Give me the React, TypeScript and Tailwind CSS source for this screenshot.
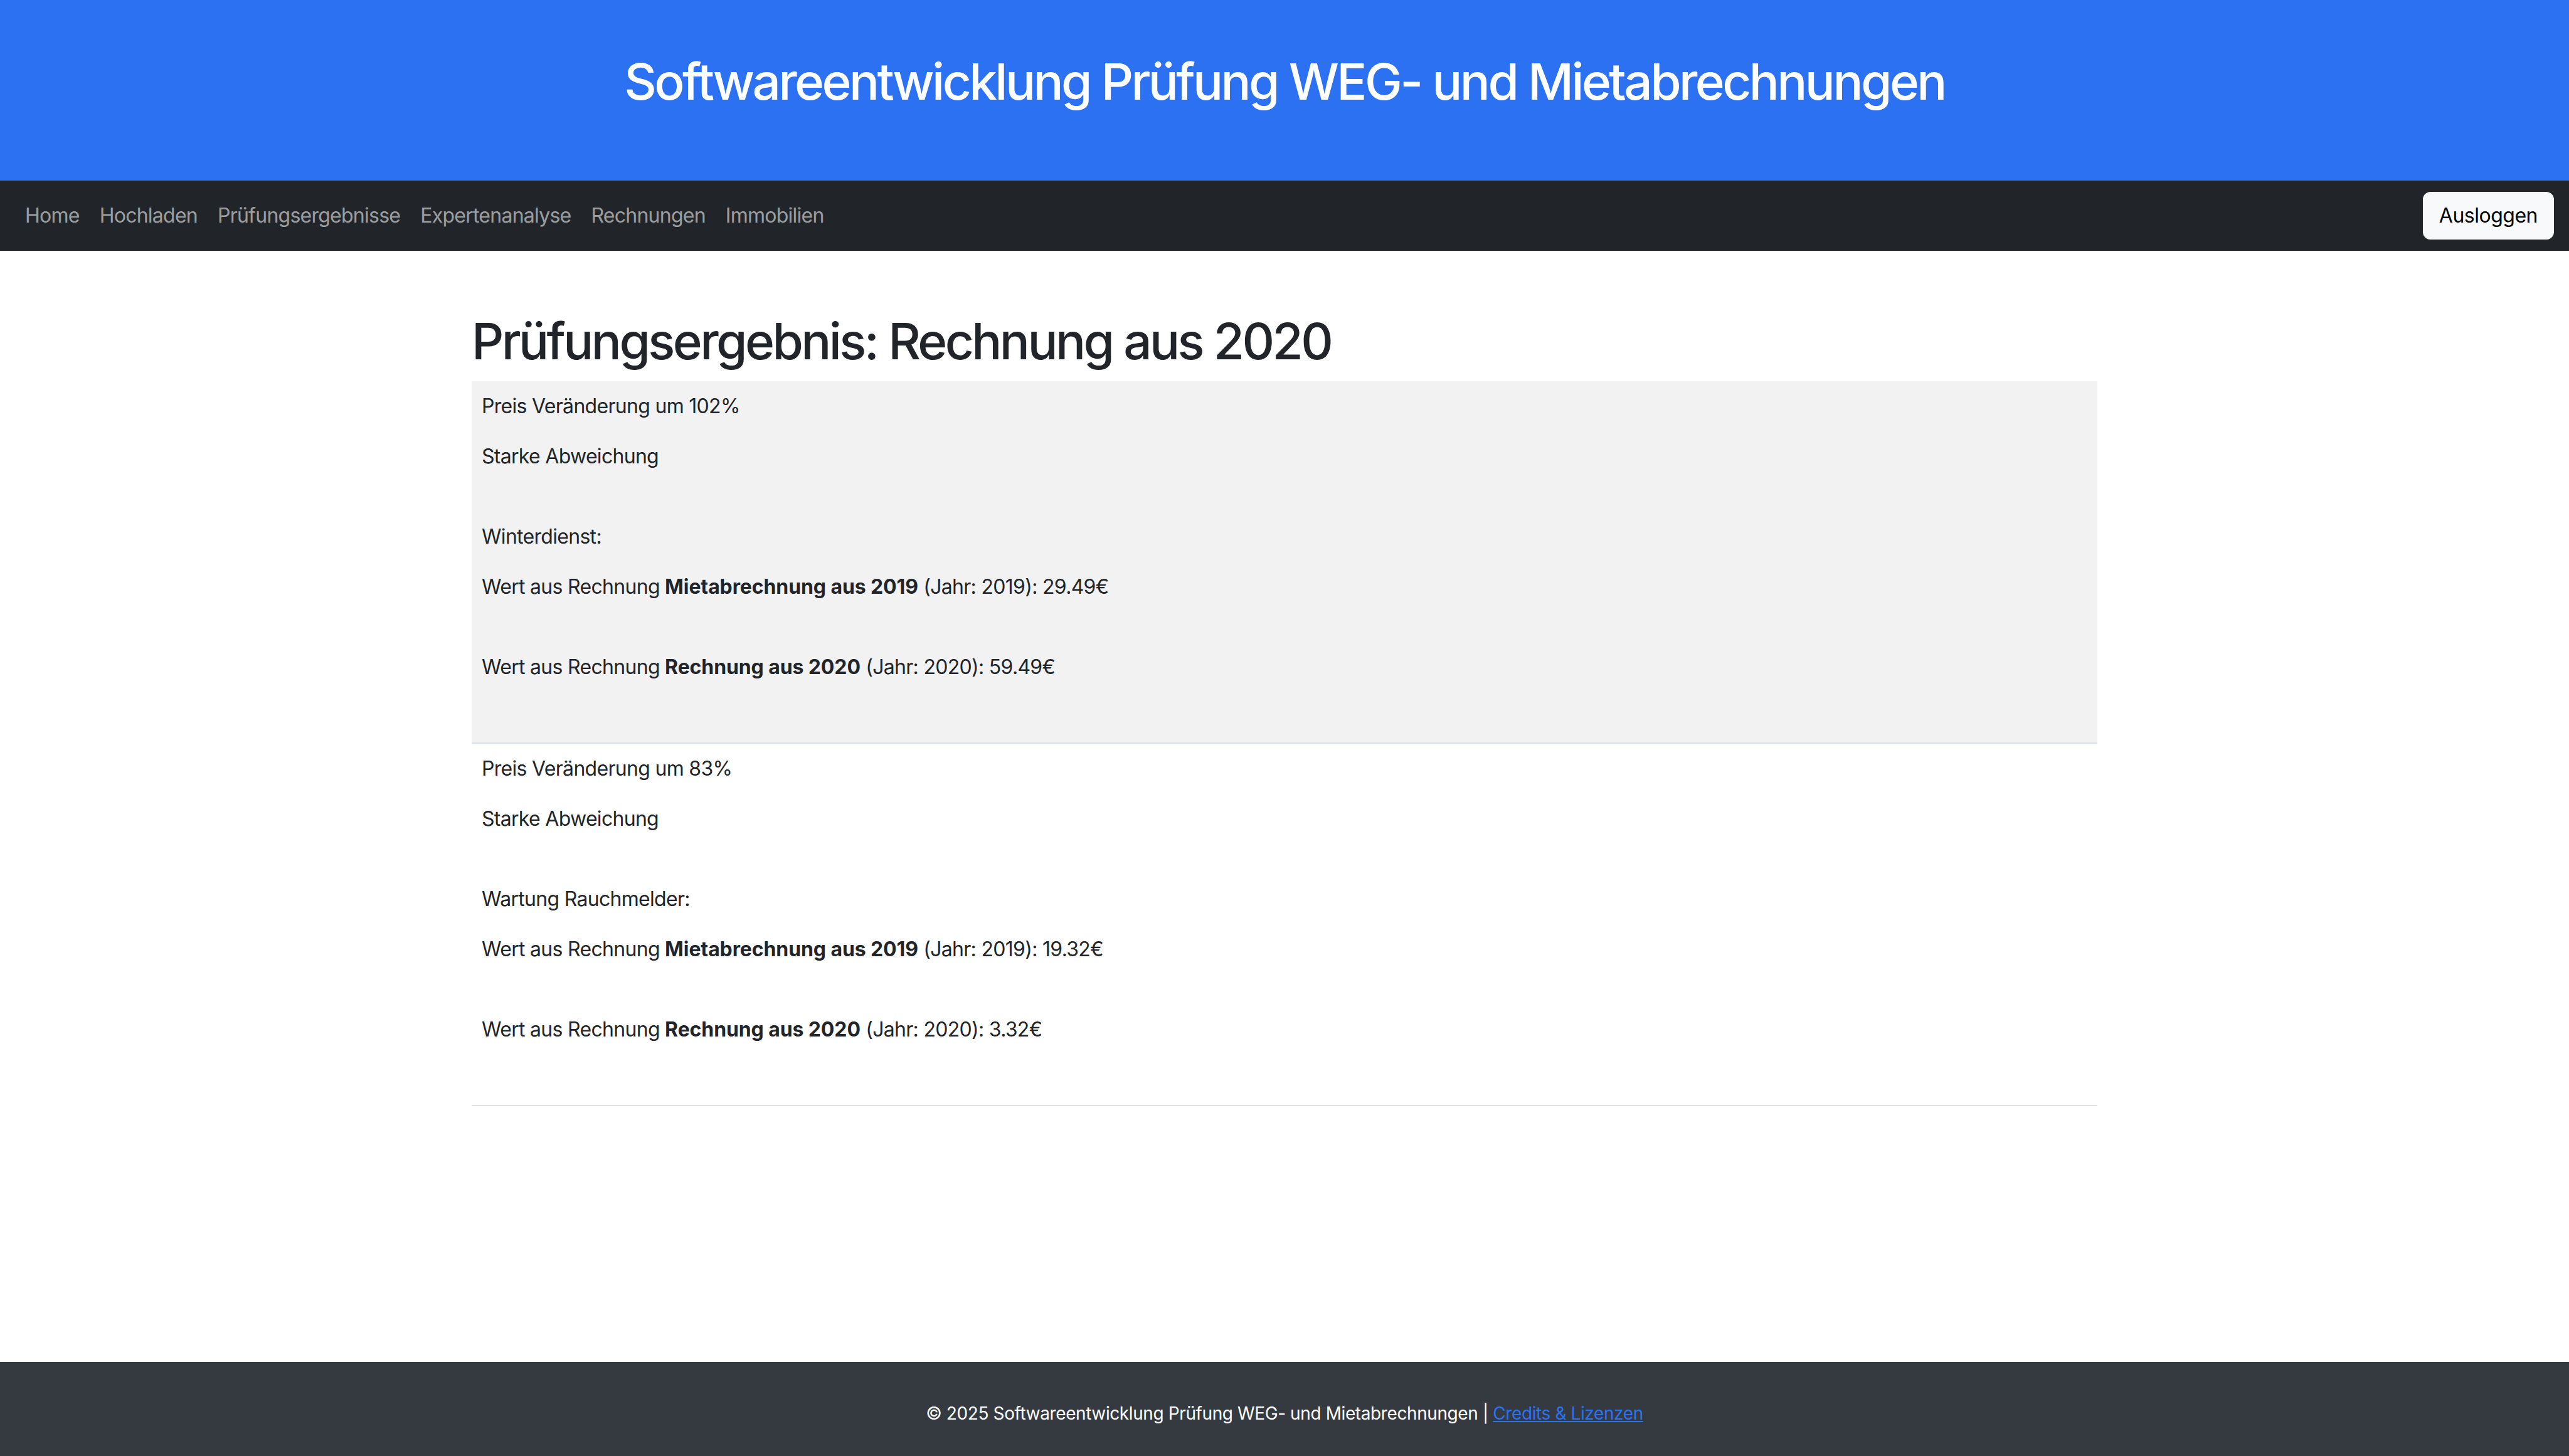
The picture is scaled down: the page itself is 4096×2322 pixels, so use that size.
import React from 'react';

const navItems = ['Home', 'Hochladen', 'Prüfungsergebnisse', 'Expertenanalyse', 'Rechnungen', 'Immobilien'];

interface Finding {
  change: number;
  label: string;
  oldValue: string;
  newValue: string;
}

const findings: Finding[] = [
  { change: 102, label: 'Winterdienst', oldValue: '29.49', newValue: '59.49' },
  { change: 83, label: 'Wartung Rauchmelder', oldValue: '19.32', newValue: '3.32' },
];

const Gap = () => <div className="h-[48px]" />;

const App: React.FC = () => {
  return (
    <div className="min-h-screen flex flex-col bg-white text-[#212529] font-['Inter','Noto_Sans',sans-serif]">
      {/* Header */}
      <header className="h-[288px] bg-[#2d71f3] pt-[82px] text-center">
        <h1 className="text-[80px] leading-[96px] font-medium text-white tracking-[-3.6px]">
          Softwareentwicklung Prüfung WEG- und Mietabrechnungen
        </h1>
      </header>

      {/* Navbar */}
      <nav className="h-[112px] bg-[#212529] flex items-center justify-between px-[24px]">
        <div className="flex items-center">
          {navItems.map((item) => (
            <a key={item} href="#" className="px-[16px] text-[32px] leading-[48px] text-white/55 tracking-[-0.75px]">
              {item}
            </a>
          ))}
        </div>
        <button className="bg-[#f8f9fa] border-2 border-[#f8f9fa] rounded-[12px] px-[24px] py-[12px] text-[32px] leading-[48px] text-black tracking-[-0.5px]">
          Ausloggen
        </button>
      </nav>

      {/* Main Content */}
      <main className="flex-1 w-[2640px] mx-auto px-[24px] mt-[96px]">
        <h1 className="text-[80px] leading-[96px] font-medium mb-[16px] tracking-[-3.6px]">
          Prüfungsergebnis: Rechnung aus 2020
        </h1>
        <div className="w-full">
          {findings.map((f, i) => (
            <div
              key={f.label}
              className={`px-[16px] py-[16px] border-b-2 border-[#dee2e6] text-[32px] leading-[48px] tracking-[-0.7px] ${i % 2 === 0 ? 'bg-[#f2f2f2]' : 'bg-white'}`}
            >
              <p className="mb-[32px]">Preis Veränderung um {f.change}%</p>
              <p className="mb-[32px]">Starke Abweichung</p>
              <Gap />
              <p className="mb-[32px]">{f.label}:</p>
              <p className="mb-[32px]">
                Wert aus Rechnung <strong className="font-bold tracking-[-0.1px]">Mietabrechnung aus 2019</strong> (Jahr: 2019): {f.oldValue}€
              </p>
              <Gap />
              <p className="mb-[32px]">
                Wert aus Rechnung <strong className="font-bold tracking-[-0.1px]">Rechnung aus 2020</strong> (Jahr: 2020): {f.newValue}€
              </p>
              <Gap />
            </div>
          ))}
        </div>
      </main>

      {/* Footer */}
      <footer className="bg-[#343a40] text-white text-center pt-[61px] pb-[47px] text-[28px] leading-[42px] tracking-[-0.4px]">
        © 2025 Softwareentwicklung Prüfung WEG- und Mietabrechnungen |{' '}
        <a href="#" className="text-[#2d71f3] underline">Credits &amp; Lizenzen</a>
      </footer>
    </div>
  );
};

export default App;
